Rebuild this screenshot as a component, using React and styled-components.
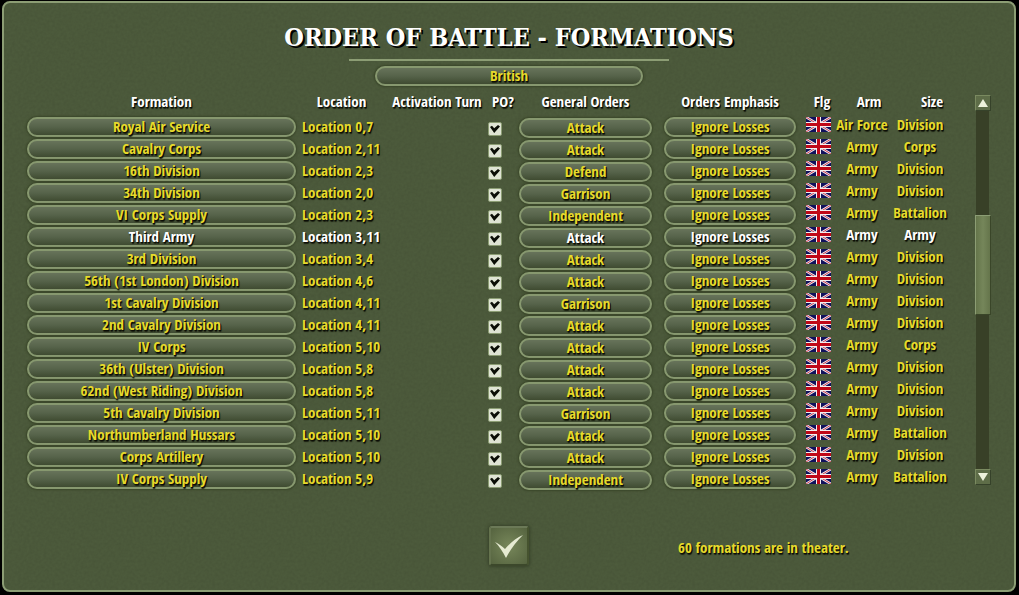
import { useState } from 'react';
import styled, { createGlobalStyle } from 'styled-components';

const GlobalStyle = createGlobalStyle`
  * {
    box-sizing: border-box;
  }
  body {
    margin: 0;
    background: #000;
    color: #e6da2c;
    font-family: "Open Sans Condensed", "Noto Sans Condensed", "Liberation Sans Narrow", "Open Sans", sans-serif;
    font-size: 15px;
    font-weight: 700;
    line-height: 20px;
    text-shadow: 1px 1px 0 #0b0d06, 1px 2px 1px #1a1f10;
  }
  button, input {
    font: inherit;
    text-shadow: inherit;
  }
`

const Page = styled.div`
  display: flex;
  min-height: 100vh;
  padding: 1px 3px 3px 2px;
`

// fine grain over the olive felt
const grain = `url("data:image/svg+xml,%3Csvg xmlns='http://www.w3.org/2000/svg' width='160' height='160'%3E%3Cfilter id='n'%3E%3CfeTurbulence type='fractalNoise' baseFrequency='0.35' numOctaves='2' stitchTiles='stitch'/%3E%3CfeColorMatrix values='0 0 0 0 0 0 0 0 0 0 0 0 0 0 0 0.1 0 0 0 -0.02'/%3E%3C/filter%3E%3Crect width='160' height='160' filter='url(%23n)'/%3E%3C/svg%3E")`

const Panel = styled.main`
  flex: 1;
  display: flex;
  flex-direction: column;
  padding: 21px 23px 24px;
  border: 2px solid #8c9d74;
  border-radius: 8px;
  background: ${grain} #4d5b3c;
`

const Header = styled.header`
  display: flex;
  flex-direction: column;
  align-items: center;
`

const Title = styled.h1`
  margin: 0;
  color: #fff;
  font-family: "DejaVu Serif Condensed", "DejaVu Serif", serif;
  font-size: 25px;
  line-height: 28px;
  text-shadow: 2px 2px 0 #000;
`

const Rule = styled.hr`
  width: 320px;
  height: 2px;
  margin: 7px 0 5px;
  border: 0;
  background: #8c9d74;
`

const PillButton = styled.button`
  display: block;
  width: ${props => props.$width || '100%'};
  height: 20px;
  padding: 0 0 2px;
  border: 2px solid #87986f;
  border-radius: 10px;
  background: linear-gradient(#67735a, #56634a 50%, #3f4b31);
  box-shadow: 0 0 2px 1px #3a4629;
  color: ${props => props.$selected ? '#fff' : '#e6da2c'};
  line-height: 14px;
  white-space: nowrap;
  cursor: pointer;
`

const Content = styled.div`
  display: flex;
  gap: 25px;
  margin-top: 5px;
`

const Table = styled.table`
  flex: 1;
  table-layout: fixed;
  border-collapse: collapse;
  text-align: center;
  white-space: nowrap;
`

const HeadCell = styled.th`
  height: 25px;
  padding: 0 ${props => props.$right || 0}px 5px ${props => props.$left || 0}px;
  color: #fff;
`

const Row = styled.tr`
  height: 22px;
  color: ${props => props.$selected ? '#fff' : '#e6da2c'};
`

const Cell = styled.td`
  padding: ${props => props.$pad || '0'};
  line-height: 16px;
  text-align: ${props => props.$align || 'center'};
`

const Tick = styled.input`
  appearance: none;
  display: block;
  width: 14px;
  height: 14px;
  margin: 0;
  border: 1px solid #8c9d74;
  border-radius: 2px;
  background: #dfe4d4;

  &:checked::after {
    content: "";
    display: block;
    width: 10px;
    height: 8px;
    margin: 2px 1px;
    background: #0a0d06;
    clip-path: polygon(0 25%, 20% 10%, 42% 40%, 80% 0, 100% 20%, 42% 100%);
  }
`

const FlagSvg = styled.svg`
  display: block;
  width: 25px;
  height: 15px;
`

const Scroll = styled.div`
  display: flex;
  flex-direction: column;
  width: 16px;
  margin: 4px 0 5px;
`

const ScrollButton = styled.button`
  display: grid;
  place-items: center;
  width: 16px;
  height: 16px;
  padding: 0;
  border: 1px solid;
  border-color: #7a8a60 #36422a #36422a #7a8a60;
  background: #5e6d48;
`

const Track = styled.div`
  flex: 1;
  display: flow-root;
  width: 13px;
  margin-left: 1px;
  background: #384027;
`

const Thumb = styled.div`
  width: 16px;
  margin-left: -1px;
  border: 1px solid;
  border-color: #8c9d74 #3a4629 #3a4629 #8c9d74;
  background: linear-gradient(90deg, #65754b, #75865a 50%, #65754b);
`

const Footer = styled.footer`
  display: grid;
  grid-template-columns: 1fr 40px 1fr;
  align-items: center;
  margin-top: 36px;
`

const OkButton = styled.button`
  grid-column: 2;
  width: 40px;
  height: 40px;
  padding: 0;
  border: 2px solid;
  border-color: #6b7957 #46532f #3c482b #65734e;
  border-radius: 3px;
  background: radial-gradient(#77875a, #55633f);
  box-shadow: 0 0 3px 1px #38432a;
`

const Status = styled.p`
  margin: 2px 0 0 149px;
`

const columnWidths = [null, 88, 100, 32, 139, 144, 32, 56, 60];

const initialFormations = [
  ['Royal Air Service', '0,7', 'Attack', 'Air Force', 'Division'],
  ['Cavalry Corps', '2,11', 'Attack', 'Army', 'Corps'],
  ['16th Division', '2,3', 'Defend', 'Army', 'Division'],
  ['34th Division', '2,0', 'Garrison', 'Army', 'Division'],
  ['VI Corps Supply', '2,3', 'Independent', 'Army', 'Battalion'],
  ['Third Army', '3,11', 'Attack', 'Army', 'Army'],
  ['3rd Division', '3,4', 'Attack', 'Army', 'Division'],
  ['56th (1st London) Division', '4,6', 'Attack', 'Army', 'Division'],
  ['1st Cavalry Division', '4,11', 'Garrison', 'Army', 'Division'],
  ['2nd Cavalry Division', '4,11', 'Attack', 'Army', 'Division'],
  ['IV Corps', '5,10', 'Attack', 'Army', 'Corps'],
  ['36th (Ulster) Division', '5,8', 'Attack', 'Army', 'Division'],
  ['62nd (West Riding) Division', '5,8', 'Attack', 'Army', 'Division'],
  ['5th Cavalry Division', '5,11', 'Garrison', 'Army', 'Division'],
  ['Northumberland Hussars', '5,10', 'Attack', 'Army', 'Battalion'],
  ['Corps Artillery', '5,10', 'Attack', 'Army', 'Division'],
  ['IV Corps Supply', '5,9', 'Independent', 'Army', 'Battalion'],
].map(([name, location, orders, arm, size]) => ({ name, location, orders, arm, size, po: true }));

const UnionFlag = () => (
  <FlagSvg viewBox="0 0 25 15" role="img" aria-label="British flag">
    <rect width="25" height="15" fill="#10105c" />
    <path d="M0 0L25 15M25 0L0 15" stroke="#f0f0f4" strokeWidth="2.4" />
    <path d="M0 0L12 7.5M25 15L13 7.5M25 0L13 7.5M0 15L12 7.5" stroke="#c8283c" strokeWidth="0.9" />
    <path d="M12.5 0V15M0 7.5H25" stroke="#f4f0f0" strokeWidth="5" />
    <path d="M12.5 0V15M0 7.5H25" stroke="#c00818" strokeWidth="3" />
  </FlagSvg>
)

const Arrow = ({ down }) => (
  <svg width="12" height="10" viewBox="0 0 12 10">
    <path d={down ? 'M1 1H11L6 9Z' : 'M1 9H11L6 1Z'} fill="#eef2dc" />
  </svg>
)

function App() {
  const [formations, setFormations] = useState(initialFormations);
  const [selected, setSelected] = useState('Third Army');

  const togglePo = (index) => {
    setFormations(formations.map((f, i) => i === index ? { ...f, po: !f.po } : f));
  }

  // 60 formations in the list, 17 rows of them visible
  const trackHeight = formations.length * 22 - 16;
  const thumb = { height: Math.round(trackHeight * 17 / 61), marginTop: 104 };

  return (
    <>
      <GlobalStyle />
      <Page>
        <Panel>
          <Header>
            <Title>ORDER OF BATTLE - FORMATIONS</Title>
            <Rule />
            <PillButton $width="268px">British</PillButton>
          </Header>
          <Content>
            <Table>
              <colgroup>
                {columnWidths.map((width, i) => <col key={i} width={width || undefined} />)}
              </colgroup>
              <thead>
                <tr>
                  <HeadCell $right={3}>Formation</HeadCell>
                  <HeadCell $right={3}>Location</HeadCell>
                  <HeadCell>Activation Turn</HeadCell>
                  <HeadCell>PO?</HeadCell>
                  <HeadCell $right={6}>General Orders</HeadCell>
                  <HeadCell>Orders Emphasis</HeadCell>
                  <HeadCell $left={8}>Flg</HeadCell>
                  <HeadCell $left={14}>Arm</HeadCell>
                  <HeadCell $left={24}>Size</HeadCell>
                </tr>
              </thead>
              <tbody>
                {formations.map((f, i) => {
                  const isSelected = f.name === selected;
                  return (
                    <Row key={f.name} $selected={isSelected}>
                      <Cell $pad="0 3px 0 0">
                        <PillButton $selected={isSelected} onClick={() => setSelected(f.name)}>{f.name}</PillButton>
                      </Cell>
                      <Cell $align="left" $pad="0 0 2px 3px">Location {f.location}</Cell>
                      <Cell />
                      <Cell $pad="4px 0 0 1px">
                        <Tick type="checkbox" aria-label={`PO ${f.name}`} checked={f.po} onChange={() => togglePo(i)} />
                      </Cell>
                      <Cell $pad="2px 6px 0 0">
                        <PillButton $selected={isSelected}>{f.orders}</PillButton>
                      </Cell>
                      <Cell $pad="0 6px">
                        <PillButton $selected={isSelected}>Ignore Losses</PillButton>
                      </Cell>
                      <Cell $pad="0 0 6px 4px"><UnionFlag /></Cell>
                      <Cell $pad="0 0 6px">{f.arm}</Cell>
                      <Cell $pad="0 0 6px">{f.size}</Cell>
                    </Row>
                  )
                })}
              </tbody>
            </Table>
            <Scroll>
              <ScrollButton aria-label="Scroll up"><Arrow /></ScrollButton>
              <Track>
                <Thumb style={thumb} />
              </Track>
              <ScrollButton aria-label="Scroll down"><Arrow down /></ScrollButton>
            </Scroll>
          </Content>
          <Footer>
            <OkButton aria-label="OK">
              <svg width="36" height="36" viewBox="0 0 36 36">
                <path d="M4 14C8 16 11 18 14 21C19 15 25 10 32 7C25 14 19 22 15 30C12 24 8 18 4 14Z" fill="#e6ebd2" />
              </svg>
            </OkButton>
            <Status>60 formations are in theater.</Status>
          </Footer>
        </Panel>
      </Page>
    </>
  );
}
export default App;
